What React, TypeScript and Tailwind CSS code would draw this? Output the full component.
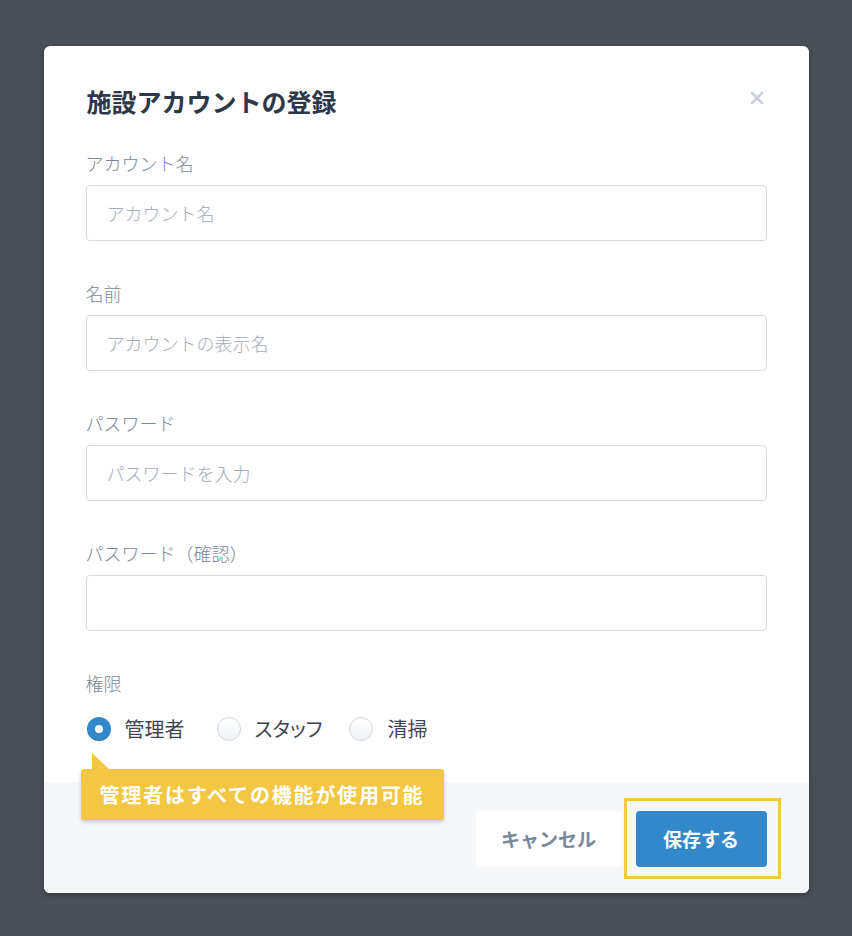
import React from "react";

const font = { fontFamily: '"Noto Sans CJK JP", "Noto Sans", sans-serif' };

function Field({ label, placeholder }: { label: string; placeholder: string }) {
  return (
    <div className="flex flex-col">
      <div className="h-[26px] text-[18px] font-light leading-[26px] text-[#7b8898]">{label}</div>
      <input
        className="mt-[9px] h-[56px] w-full rounded-[4px] border border-[#d5dbe3] bg-white px-5 text-[18px] font-light text-[#2d3748] outline-none placeholder:text-[#a3acb9]"
        placeholder={placeholder}
        style={font}
      />
    </div>
  );
}

function Radio({ label, checked }: { label: string; checked?: boolean }) {
  return (
    <label className="flex items-center">
      {checked ? (
        <span className="flex h-6 w-6 items-center justify-center rounded-full bg-[#3288c8] shadow-[inset_0_-1px_0_rgba(0,0,0,0.15)]">
          <span className="h-[8px] w-[8px] rounded-full bg-white" />
        </span>
      ) : (
        <span className="h-6 w-6 rounded-full border border-[#cfd6df] bg-gradient-to-b from-white to-[#eef1f4]" />
      )}
      <span className="ml-[14px] text-[20px] leading-[28px] text-[#3f4653] [font-feature-settings:'palt']">{label}</span>
    </label>
  );
}

export default function App() {
  return (
    <div className="flex h-[936px] w-full justify-center bg-[#4a5059] pt-[46px]" style={font}>
      <div className="flex h-[847px] w-[765px] flex-col overflow-visible rounded-[6px] bg-white shadow-[0_2px_6px_rgba(0,0,0,0.3)]">
        <div className="relative flex flex-col px-[42px] pt-[37px]">
          <div className="flex h-[36px] items-center justify-between">
            <h1 className="pl-px text-[25px] font-bold leading-[36px] text-[#2d3748]">施設アカウントの登録</h1>
            <svg width="14" height="14" viewBox="0 0 14 14" className="mr-[3px] mt-[-7px]">
              <path d="M2 2 L12 12 M12 2 L2 12" stroke="#c7d0dc" strokeWidth="2.6" strokeLinecap="round" />
            </svg>
          </div>
          <div className="mt-[31px] flex flex-col gap-[39px]">
            <Field label="アカウント名" placeholder="アカウント名" />
            <Field label="名前" placeholder="アカウントの表示名" />
            <Field label="パスワード" placeholder="パスワードを入力" />
            <Field label="パスワード（確認）" placeholder="" />
            <div className="flex flex-col">
              <div className="h-[26px] text-[18px] font-light leading-[26px] text-[#7b8898]">権限</div>
              <div className="relative mt-[21px] flex h-6 items-center pl-px">
                <Radio label="管理者" checked />
                <div className="w-[32px]" />
                <Radio label="スタッフ" />
                <div className="w-[27px]" />
                <Radio label="清掃" />
                <div className="absolute left-[-5px] top-[36px] z-10">
                  <svg width="18" height="17" viewBox="0 0 18 17" className="absolute left-[11px] top-0">
                    <path d="M0 0 L0 17 L18 17 Z" fill="#f3c744" />
                  </svg>
                  <div className="mt-[16px] flex h-[51px] w-[363px] items-center rounded-[3px] bg-[#f3c744] pl-[19px] text-[20px] font-bold tracking-[1.8px] text-white shadow-[0_2px_4px_rgba(0,0,0,0.18)]">
                    管理者はすべての機能が使用可能
                  </div>
                </div>
              </div>
            </div>
          </div>
        </div>
        <div className="mt-[41px] flex flex-1 items-start justify-end gap-[14px] rounded-b-[6px] bg-[#f6f7f9] pr-[42px] pt-[29px]">
          <button className="h-[56px] w-[146px] rounded-[4px] bg-white text-[19px] font-bold text-[#7b8898]" style={font}>
            キャンセル
          </button>
          <div className="relative">
            <button className="h-[56px] w-[131px] rounded-[4px] bg-[#3288c8] text-[19px] font-bold text-white" style={font}>
              保存する
            </button>
            <div className="pointer-events-none absolute bottom-[-12px] left-[-12px] right-[-14px] top-[-13px] border-[3px] border-[#f5c842]" />
          </div>
        </div>
      </div>
    </div>
  );
}
